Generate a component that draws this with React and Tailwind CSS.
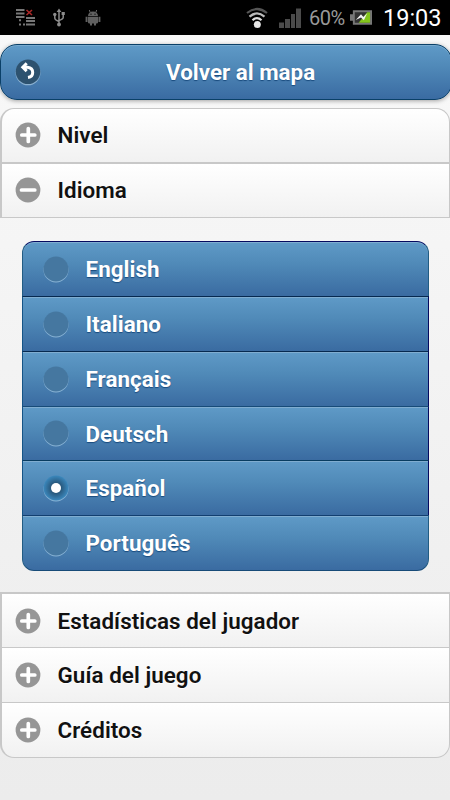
const LANGUAGES = [
  { name: 'English', box: 'h-[55px] rounded-t-[12px] border-t border-t-[#050a60] border-x border-x-[#225c83]' },
  { name: 'Italiano', box: 'h-[55px] border-t border-t-[#06294f] border-l border-l-[#155486] border-r border-r-[#050a60]' },
  { name: 'Français', box: 'h-[55px] border-t border-t-[#06294f] border-l border-l-[#155486] border-r border-r-[#050a60]' },
  { name: 'Deutsch', box: 'h-[54px] border-t border-t-[#174b78] border-l border-l-[#155486] border-r border-r-[#050a60]' },
  { name: 'Español', box: 'h-[55px] border-t border-t-[#083c60] border-l border-l-[#155486] border-r border-r-[#050a60]', selected: true },
  { name: 'Português', box: 'h-[56px] rounded-b-[12px] border-y border-t-[#123f70] border-b-[#174b78] border-x border-x-[#225c83]' },
];

function FoldIcon({ open }) {
  return (
    <svg className="block h-[26px] w-[26px] shrink-0" viewBox="0 0 26 26">
      <circle cx="13" cy="13" r="12.4" fill="#969696" />
      <path d={open ? 'M6.500 13H19.800' : 'M6.800 13H19.800M13.300 6.500V19.500'} stroke="#fff" strokeWidth="3.7" strokeLinecap="round" />
    </svg>
  );
}

function Section({ title, open, className }) {
  return (
    <div className={`flex items-center border-[#c8c8c8] bg-linear-to-b from-white to-[#f1f1f1] pl-[13px] ${className}`}>
      <FoldIcon open={open} />
      <span className="ml-[16.5px] text-[22.4px] leading-[28px] font-semibold tracking-[0.06px] text-[#111] [text-shadow:0_1px_0_#fff]">{title}</span>
    </div>
  );
}

function StatusBar() {
  return (
    <div className="flex h-[35px] items-center bg-black text-[#999]">
      <svg className="ml-[15px] h-[19px] w-5" viewBox="0 0 20 19">
        <path d="M1 2H9.500M1 5.500H9.500M1 9H9.500M11 10H20M11 13H20M11 16.500H20" stroke="#777" strokeWidth="1.8" />
        <path d="M4 12.200H6M4 16.500H6M8 16.500H10" stroke="#777" strokeWidth="2" />
        <path d="M11.500 2L17 7M17 2L11.500 7" stroke="#a92727" strokeWidth="1.6" />
      </svg>
      <svg className="ml-[18px] h-[19px] w-3" viewBox="0 0 12 19">
        <path d="M6 2V17M1.800 6V10Q1.800 12 6 13.500M10.200 5V9.500Q10.200 11 6 12.500" fill="none" stroke="#8c8c8c" strokeWidth="1.5" />
        <path d="M3.600 4L6 .5L8.400 4ZM8.600 4H11.800V7H8.600Z" fill="#8c8c8c" />
        <circle cx="1.800" cy="6.500" r="1.700" fill="#8c8c8c" />
        <circle cx="6" cy="16.500" r="1.900" fill="#8c8c8c" />
      </svg>
      <svg className="ml-5 h-[17px] w-4" viewBox="0 0 16 17">
        <path d="M4.300 1L5.200 3.500M11.700 1L10.800 3.500" stroke="#666" />
        <path d="M3 7Q3.300 2.500 8 2.500T13 7ZM3 7.700H13V13.500Q13 14.500 11.500 14.500H11V16.500H9V14.500H7V16.500H5V14.500H4.500Q3 14.500 3 13.500ZM.600 7.700H2.500V13H.600ZM13.500 7.700H15.400V13H13.500Z" fill="#606060" />
        <circle cx="6" cy="5.200" r=".6" fill="#000" />
        <circle cx="10" cy="5.200" r=".6" fill="#000" />
      </svg>
      <svg className="ml-[144px] h-[22px] w-6" viewBox="0 0 24 22">
        <path d="M2 6Q12 -2 22 6" fill="none" stroke="#555" strokeWidth="2.2" />
        <path d="M4.500 9.700Q12 3.200 19.500 9.700" fill="none" stroke="#bbb" strokeWidth="2.200" />
        <path d="M7.500 13.200Q12 9 16.500 13.200" fill="none" stroke="#ddd" strokeWidth="2.200" />
        <circle cx="12.300" cy="17.500" r="3.500" fill="#e8e8e8" />
      </svg>
      <svg className="ml-2.5 h-[20px] w-[22px]" viewBox="0 0 22 20">
        <path d="M0 14.500H5V20H0ZM6 11H11V20H6ZM12 6H16V20H12ZM17 .500H22V20H17Z" fill="#4b4b4b" />
      </svg>
      <span className="ml-2 w-[37px] text-[20px] leading-6 tracking-[-0.5px] whitespace-nowrap">60%</span>
      <svg className="ml-1 h-[17px] w-[22px]" viewBox="0 0 23 17">
        <path d="M0 5H3V1H23V16H3V12H0Z" fill="#777" />
        <path d="M5 3H21V14H5Z" fill="#333" />
        <path d="M18 3H21V14H9Z" fill="#83c51b" />
        <path d="M6 11L11.500 5L14 8L18 4L14.500 11.500L11.500 8.500Z" fill="#f2f2f2" />
      </svg>
      <span className="ml-[11px] text-[23.5px] leading-7 whitespace-nowrap text-white">19:03</span>
    </div>
  );
}

export default function App() {
  return (
    <div className="flex h-[800px] w-[450px] flex-col overflow-hidden bg-linear-to-b from-[#f9f9f9] to-[#ececec] font-['Roboto',sans-serif]">
      <StatusBar />
      <button className="mt-[9px] flex h-14 w-[452px] shrink-0 items-center rounded-[17px] border border-[#0a4068] bg-linear-to-b from-[#5f9ac7] via-[#5089b8] via-40% to-[#3a6ba2] pl-[14px] shadow-[0_1px_4px_rgba(0,0,0,.35),inset_0_1px_0_#78aace]">
        <svg className="h-[27px] w-[26px]" viewBox="0 0 26 27">
          <circle cx="13" cy="13.800" r="12.500" fill="#8bb1d1" />
          <circle cx="13" cy="12.800" r="12.300" fill="#2d526f" />
          <path d="M11.700 4.300L7.800 8.200L11.700 12.100M8.500 8.300H12.500Q17.700 9 17.700 13.500Q17.700 17.800 13 18.500" fill="none" stroke="#fff" strokeWidth="3" />
        </svg>
        <span className="ml-[125px] text-[22.4px] leading-7 font-bold whitespace-nowrap text-white [text-shadow:0_1px_1px_#194b7e]">Volver al mapa</span>
      </button>

      <div className="mt-2 shrink-0">
        <Section title="Nivel" className="h-[54px] rounded-t-[14px] border-t border-r border-l-2 pb-px" />
        <Section title="Idioma" open className="h-14 border-t-2 border-r border-b border-l-2 pb-px" />
      </div>

      <div className="mt-[23px] ml-[21.5px] w-[407.5px] shrink-0">
        {LANGUAGES.map(({ name, box, selected }) => (
          <div key={name} className={`flex items-center bg-linear-to-b from-[#5f9ac7] via-[#508ab8] via-40% to-[#3a6ba1] pl-5 shadow-[inset_0_1px_0_#80add0] ${box}`}>
            <svg className="h-[27px] w-[26px]" viewBox="0 0 26 27">
              <defs>
                <radialGradient id="radioOn">
                  <stop offset=".3" stopColor="#254f70" />
                  <stop offset="1" stopColor="#3b88bd" />
                </radialGradient>
              </defs>
              <circle cx="13" cy="14" r="12.500" fill="#89b3d5" />
              <circle cx="13" cy="13" r="12.500" fill={selected ? 'url(#radioOn)' : '#4577a0'} />
              {selected && <circle cx="13" cy="13" r="5" fill="#fff" />}
            </svg>
            <span className="ml-[17px] text-[22.4px] leading-7 font-bold tracking-[0.04px] text-white [text-shadow:0_1px_1px_#194b7e]">{name}</span>
          </div>
        ))}
      </div>

      <div className="mt-[21px] shrink-0">
        <Section title="Estadísticas del jugador" className="h-14 border-t-2 border-r border-b border-l-2" />
        <Section title="Guía del juego" className="h-[55px] border-r border-b border-l-2" />
        <Section title="Créditos" className="h-[55px] rounded-b-[14px] border-r border-b border-l-2" />
      </div>
    </div>
  );
}
